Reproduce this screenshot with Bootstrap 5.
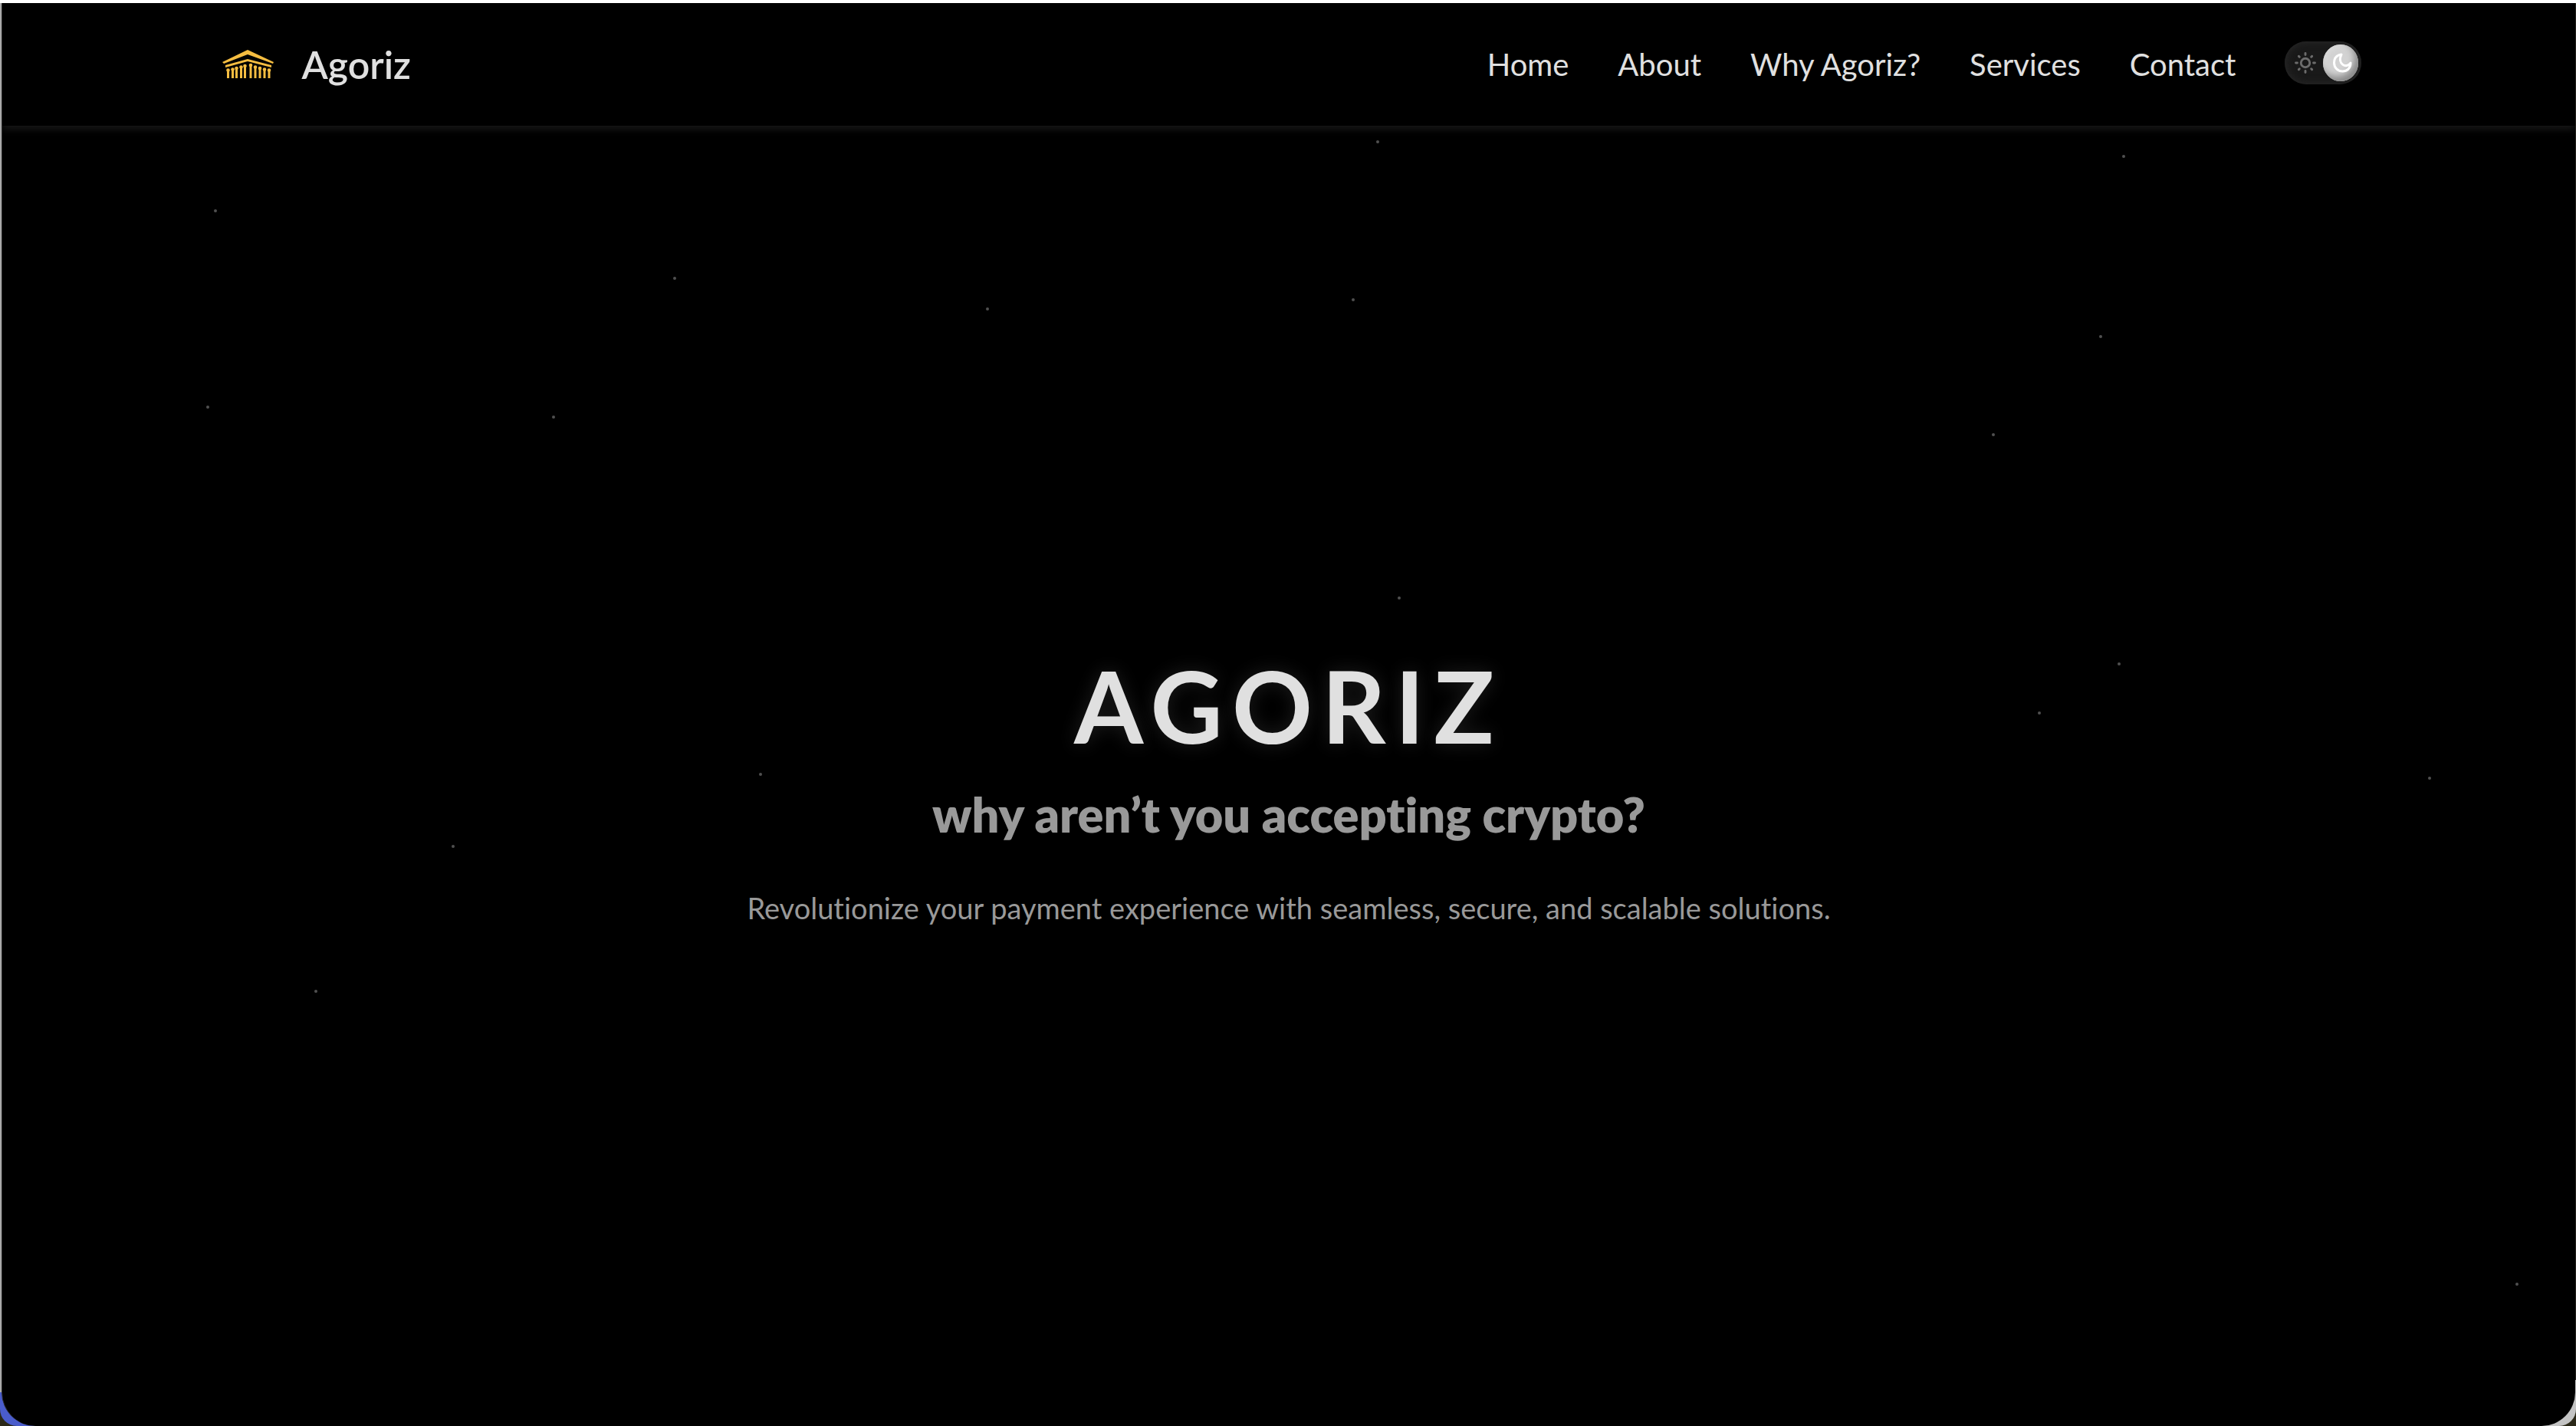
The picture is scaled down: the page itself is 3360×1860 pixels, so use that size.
<!DOCTYPE html>
<html lang="en">
<head>
<meta charset="utf-8">
<meta name="viewport" content="width=device-width, initial-scale=1">
<title>Agoriz</title>
<link rel="stylesheet" href="https://cdn.jsdelivr.net/npm/bootstrap@5.3.0/dist/css/bootstrap.min.css">
<style>
  body { background: #2b2818; font-family: Lato, sans-serif; font-variant-ligatures: none; color: #e0e0e0; overflow: hidden; }
  /* window frame: white top edge, grey sides, blue lower left corner */
  .win-frame {
    min-height: 100vh;
    padding: 4px 1px 0 2px;
    border-radius: 0 0 22px 22px;
    background:
      linear-gradient(#fff, #fff) 0 0 / 100% 4px no-repeat,
      linear-gradient(#4a5ccb, #4a5ccb) 0 100% / 60px 44px no-repeat,
      linear-gradient(#c4c4c4, #c4c4c4) 100% 100% / 60px 60px no-repeat,
      linear-gradient(90deg, #aaa 50%, #24221c 50%);
  }
  .site { background: #000; border-left: 1px solid #2c2c2c; border-radius: 0 0 44px 44px; overflow: hidden; }
  .site-header { height: 160px; box-shadow: 0 4px 10px rgba(255, 255, 255, .1); background: #000; z-index: 2; }
  .site-wrap { width: 83.4%; }
  .brand-link { gap: 36px; }
  .brand-name { font-size: 50px; line-height: 60px; font-weight: 600; color: #e0e0e0; }
  .brand-mark { width: 68px; height: 38px; }
  .menu-link { font-size: 40px; line-height: 48px; font-weight: 400; color: #e0e0e0; }
  .gap-links { gap: 64px; }
  .theme-track {
    width: 100px; height: 56px; border-radius: 28px; background: #191919;
    box-shadow: inset 0 0 10px 2px #262626; padding: 4px; cursor: pointer;
  }
  .theme-knob {
    width: 48px; height: 48px; background: #d2d2d2;
    box-shadow: inset -5px -6px 8px #8a8a8a, inset 2px 2px 6px #ddd;
  }
  .theme-sun { width: 48px; height: 48px; }
  .hero-title { font-size: 130px; line-height: 156px; font-weight: 700; letter-spacing: 12px; color: #e0e0e0; text-shadow: 0 0 24px rgba(255, 255, 255, .12); }
  .hero-sub { font-size: 63px; line-height: 76px; font-weight: 800; color: #999; margin-top: 26px; }
  .hero-copy { font-size: 38px; line-height: 48px; font-weight: 400; color: #999; margin-top: 60px; }
  .hero { padding-top: 26px; }
  .star-dot { fill: #505050; }
</style>
</head>
<body>
<div class="win-frame d-flex flex-column">
  <div class="site flex-grow-1 d-flex flex-column position-relative">
    <header class="site-header d-flex align-items-center justify-content-center position-relative">
      <div class="site-wrap d-flex align-items-center justify-content-between">
        <a href="#" class="brand-link d-flex align-items-center text-decoration-none ms-2">
          <svg class="brand-mark" viewBox="0 0 68 38" fill="#f5bd41" aria-hidden="true">
            <path d="M33 0 67 16 66 18 33 6 2 18 0 16Z"/>
            <path d="M33 12 64 20V23L33 15 4 23V20Z"/>
            <path stroke="#f5bd41" stroke-width="3" d="M7.500 26V37M13.500 25V37M18.500 24V37M24.500 22V37M29.500 21V37M37 20V37M43 22V37M49 24V37M55 25V37M61 26V37"/>
            <circle cx="7.500" cy="26.500" r="2.300"/><circle cx="13.500" cy="25.500" r="2.300"/><circle cx="18.500" cy="24" r="2.300"/><circle cx="24.500" cy="22.500" r="2.300"/><circle cx="29.500" cy="21" r="2.300"/><circle cx="37" cy="20" r="2.300"/><circle cx="43" cy="22.500" r="2.300"/><circle cx="49" cy="24" r="2.300"/><circle cx="55" cy="25.500" r="2.300"/><circle cx="61" cy="26.500" r="2.300"/>
          </svg>
          <span class="brand-name">Agoriz</span>
        </a>
        <div class="gap-links d-flex align-items-center">
          <nav class="gap-links d-flex">
            <a class="menu-link text-decoration-none" href="#">Home</a>
            <a class="menu-link text-decoration-none" href="#">About</a>
            <a class="menu-link text-decoration-none" href="#">Why Agoriz?</a>
            <a class="menu-link text-decoration-none" href="#">Services</a>
            <a class="menu-link text-decoration-none" href="#">Contact</a>
          </nav>
          <div class="mb-1">
            <input type="checkbox" role="switch" class="visually-hidden" id="themeSwitch" aria-label="Dark theme" checked>
            <label for="themeSwitch" class="theme-track d-flex align-items-center">
              <svg class="theme-sun" viewBox="0 0 48 48" fill="none" stroke="#6c6c6c" stroke-width="3" stroke-linecap="round" aria-hidden="true">
                <circle cx="24" cy="24" r="6"/>
                <path d="M24 11v2M24 35v2M11 24h2M35 24h2M15 15l1 1M32 32l1 1M33 15l-1 1M16 32l-1 1"/>
              </svg>
              <span class="theme-knob rounded-circle d-flex align-items-center justify-content-center">
                <svg width="32" height="32" viewBox="0 0 32 32" fill="none" stroke="#fff" stroke-width="3" stroke-linejoin="round" aria-hidden="true">
                  <path d="M17 5C10 6 7.500 11 7.500 16c0 6 4.500 11 11 11 6 0 10.500-4 10.500-11C24 24 11 18 17 5Z"/>
                </svg>
              </span>
            </label>
          </div>
        </div>
      </div>
    </header>
    <main class="hero flex-grow-1 d-flex flex-column align-items-center justify-content-center text-center">
      <h1 class="hero-title mb-0">AGORIZ</h1>
      <h2 class="hero-sub mb-0">why aren’t you accepting crypto?</h2>
      <p class="hero-copy mb-0">Revolutionize your payment experience with seamless, secure, and scalable solutions.</p>
    </main>
    <!-- star field -->
    <svg class="position-absolute top-0 start-0 w-100 h-100 pe-none" viewBox="3 4 3356 1856" preserveAspectRatio="none" aria-hidden="true">
      <g class="star-dot">
        <circle cx="1797" cy="185" r="2"/><circle cx="2770" cy="204" r="2"/><circle cx="281" cy="275" r="2"/>
        <circle cx="880" cy="363" r="2"/><circle cx="1288" cy="403" r="2"/><circle cx="1765" cy="391" r="2"/>
        <circle cx="2740" cy="439" r="2"/><circle cx="271" cy="531" r="2"/><circle cx="722" cy="544" r="2"/>
        <circle cx="2600" cy="567" r="2"/><circle cx="1825" cy="780" r="2"/><circle cx="2764" cy="866" r="2"/>
        <circle cx="2660" cy="930" r="2"/><circle cx="992" cy="1010" r="2"/><circle cx="3169" cy="1015" r="2"/>
        <circle cx="591" cy="1104" r="2"/><circle cx="412" cy="1293" r="2"/><circle cx="3283" cy="1675" r="2"/>
      </g>
    </svg>
  </div>
</div>
<script src="https://cdn.jsdelivr.net/npm/bootstrap@5.3.0/dist/js/bootstrap.bundle.min.js"></script>
</body>
</html>
